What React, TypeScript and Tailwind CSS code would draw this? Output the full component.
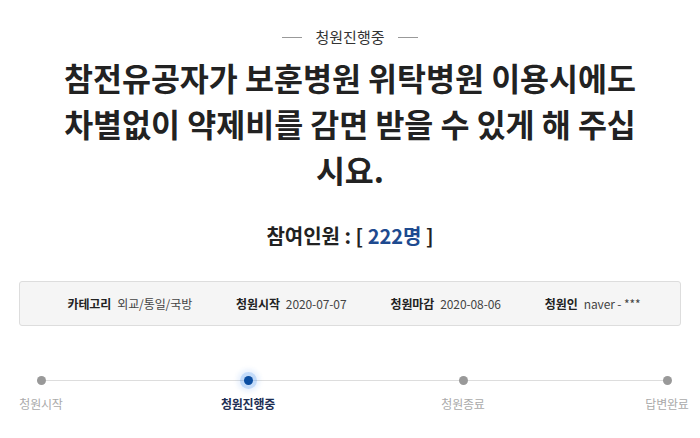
const font = "font-['Noto_Sans_CJK_KR','Noto_Sans',sans-serif]";

const infos = [
  { label: "카테고리", value: "외교/통일/국방" },
  { label: "청원시작", value: "2020-07-07" },
  { label: "청원마감", value: "2020-08-06" },
  { label: "청원인", value: "naver - ***" },
];

const steps = [
  { name: "청원시작", gap: "ml-0" },
  { name: "청원진행중", gap: "ml-[207px]", active: true },
  { name: "청원종료", gap: "ml-[215px]" },
  { name: "답변완료", gap: "ml-[204px]" },
];

export default function App() {
  return (
    <div className={`${font} w-[700px] h-[438px] bg-white overflow-hidden text-[#222]`}>
      {/* status heading */}
      <div className="flex items-center justify-center gap-[13px] pt-[26px]">
        <span className="w-[20px] h-px bg-[#999]" />
        <span className="text-[15px] leading-[22px] text-[#333]">청원진행중</span>
        <span className="w-[20px] h-px bg-[#999]" />
      </div>

      <h1 className="mt-[6px] text-center text-[31.5px] font-bold leading-[46px] text-[#222]">
        참전유공자가 보훈병원 위탁병원 이용시에도
        <br />
        차별없이 약제비를 감면 받을 수 있게 해 주십
        <br />
        시요.
      </h1>

      <div className="mt-[30px] text-center text-[20px] font-bold leading-[28px]">
        참여인원 : [ <span className="text-[#1e4a8f]">222명</span> ]
      </div>

      {/* petition info */}
      <div className="mx-[19px] mt-[31px] h-[45px] pl-[8px] rounded-[3px] border border-[#ddd] bg-[#f5f5f5] flex items-center justify-center gap-[44px] text-[12px] tracking-[-0.1px]">
        {infos.map((it) => (
          <div key={it.label} className="flex items-center gap-[6px]">
            <span className="font-bold text-[#222]">{it.label}</span>
            <span className="text-[#444]">{it.value}</span>
          </div>
        ))}
      </div>

      {/* progress */}
      <div className="relative ml-[41px] w-[626px] mt-[50px]">
        <div className="absolute left-0 right-0 top-[4px] h-px bg-[#ddd]" />
        <div className="flex">
          {steps.map((s) => (
            <div key={s.name} className={`${s.gap} w-0 flex flex-col items-center`}>
              {s.active ? (
                <span className="relative z-10 w-[9px] h-[9px] rounded-full bg-[#0b4ea2] shadow-[0_0_0_4px_rgba(80,150,240,0.25),0_0_4px_7px_rgba(80,150,240,0.12)]" />
              ) : (
                <span className="relative z-10 w-[9px] h-[9px] rounded-full bg-[#999]" />
              )}
              <span
                className={`mt-[10px] whitespace-nowrap text-[12px] tracking-[-0.2px] leading-[18px] ${
                  s.active ? "font-bold text-[#1d2e53]" : "text-[#aaa]"
                }`}
              >
                {s.name}
              </span>
            </div>
          ))}
        </div>
      </div>
    </div>
  );
}
